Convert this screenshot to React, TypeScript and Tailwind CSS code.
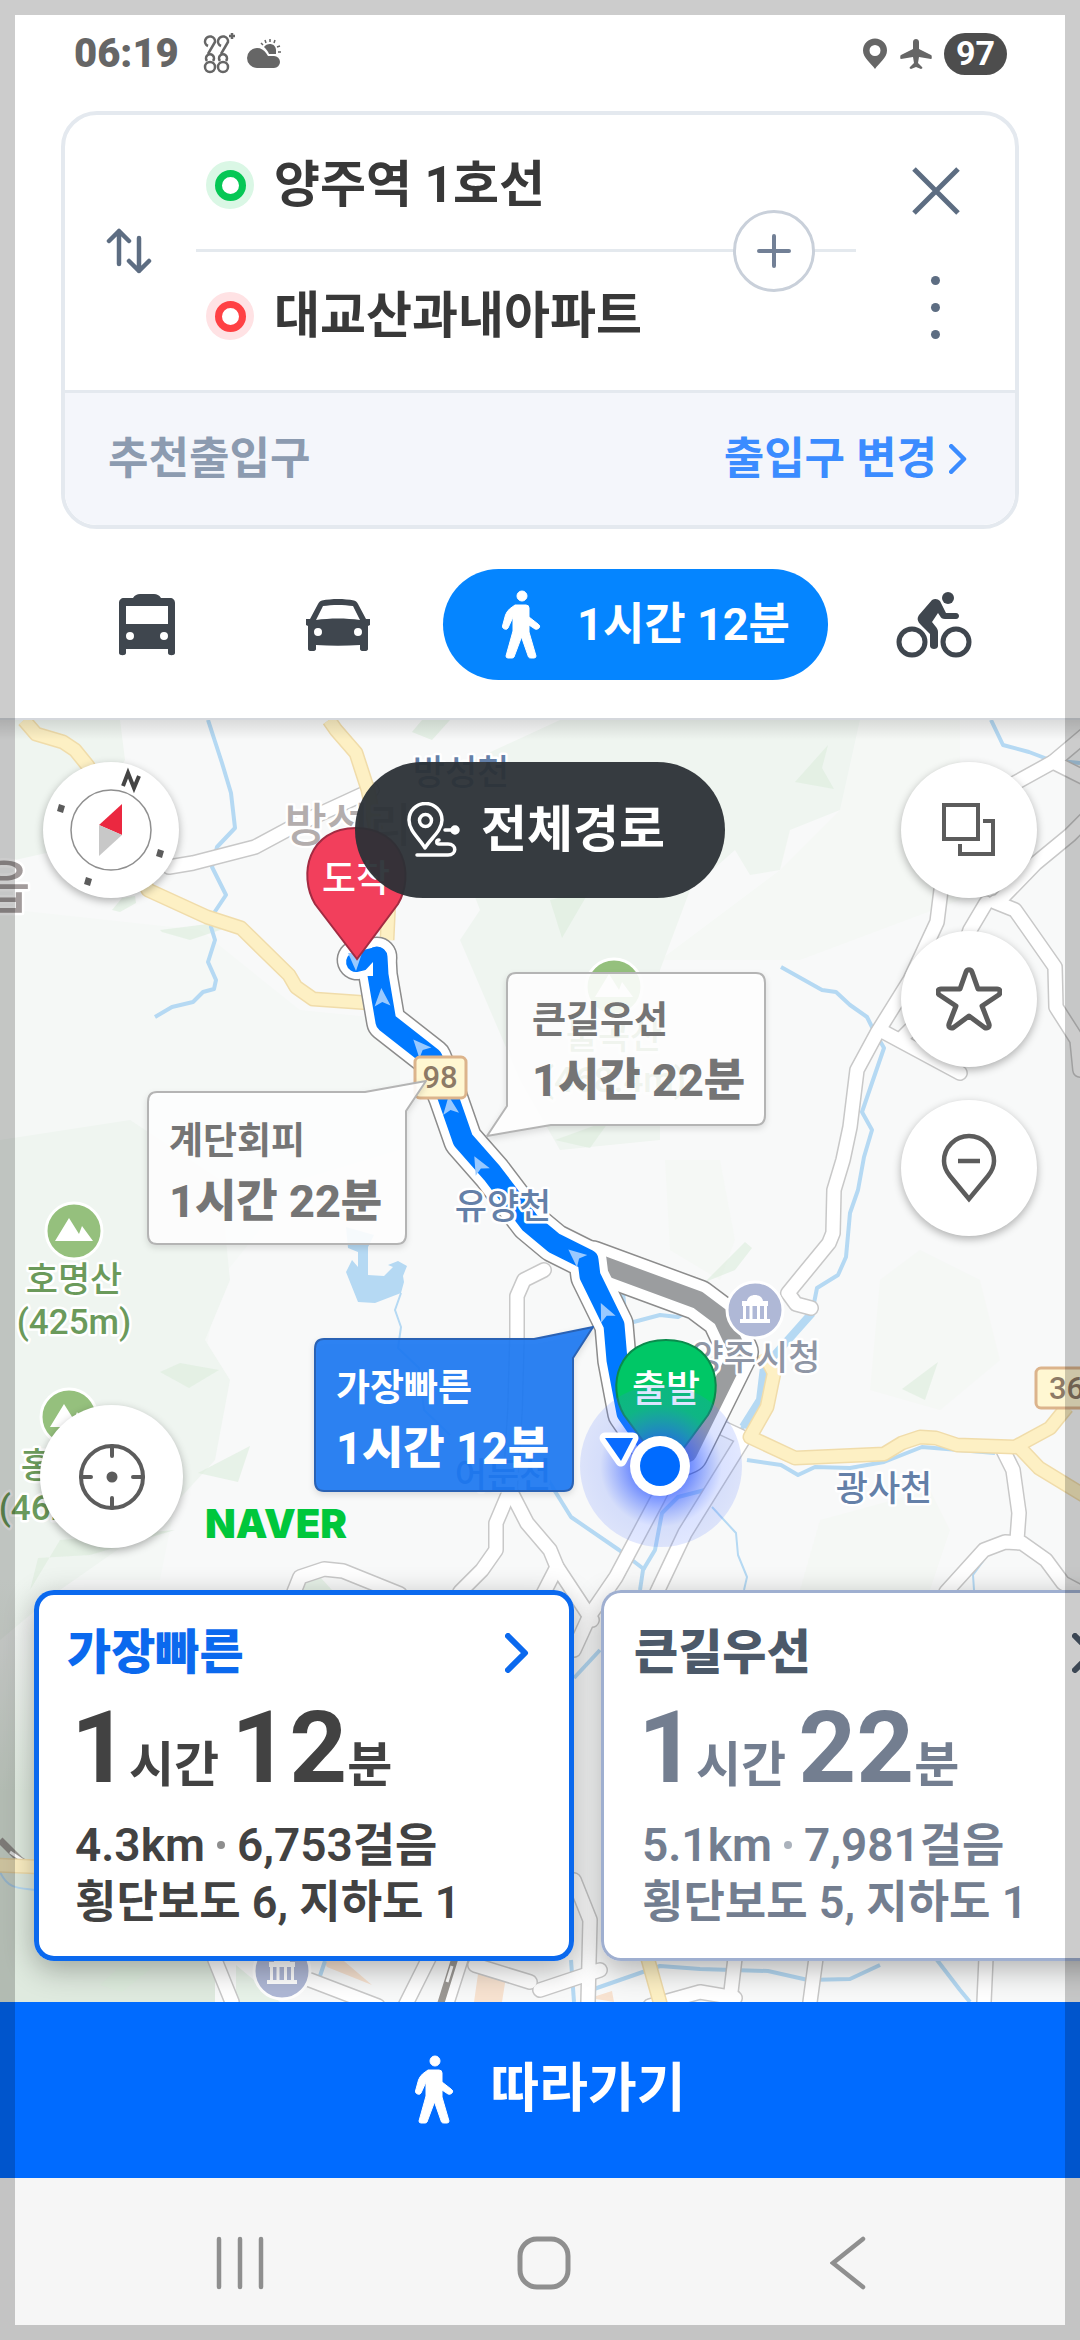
import React from 'react';

// ─────────────────────────────────────────────────────────────────────────────
// Icons
// ─────────────────────────────────────────────────────────────────────────────

const WalkIcon = () => (
  <svg width="40" height="70" viewBox="0 0 40 70" fill="currentColor" stroke="currentColor" strokeWidth="1" strokeLinejoin="round" aria-hidden="true">
    <circle cx="21" cy="6" r="5" />
    <path d="M14 15h11q3 0 3 3v9l9 7q3 2 1 4-2 2-4 1l-6-4v7l7 24q0 2-2 2h-3q-2 0-2.500-1L20.500 47 13 67q-.5 1-2 1H7q-2 0-2-2l7-25V27L7 38q-1 2-3.500 1-2.500-1-2-3l3-11q1-3 4-6z" />
  </svg>
);

const BusIcon = () => (
  <svg width="56" height="62" viewBox="0 0 56 62" fill="currentColor" fillRule="evenodd" aria-hidden="true">
    <path d="M0 9c0-3 2-5 5-5h9c2-3 4-4 7-4h14c3 0 5 1 7 4h9c3 0 5 2 5 5v50c0 3-7 3-7 0v-4H7v4c0 3-7 3-7 0zM7 12v18h42V12zM11 38a4 4 0 1 0 0 8 4 4 0 0 0 0-8zM45 38a4 4 0 1 0 0 8 4 4 0 0 0 0-8z" />
  </svg>
);

const CarIcon = () => (
  <svg width="64" height="52" viewBox="0 0 64 52" fill="currentColor" fillRule="evenodd" aria-hidden="true">
    <path d="M12 5c1-2 2-3 4-3.500 10-2 22-2 32 0 2 .5 3 1.500 4 3.500l8 15h4v6l-2 1v23c0 3-8 3-8 0v-4c-15 1-29 1-44 0v4c0 3-8 3-8 0V27l-2-1v-6h4zM17 7l-7 14c14-2 30-2 44 0L47 7c-9-1.500-21-1.500-30 0zM12 29a4 4 0 1 0 0 8 4 4 0 0 0 0-8zM52 29a4 4 0 1 0 0 8 4 4 0 0 0 0-8z" />
  </svg>
);

const BikeIcon = () => (
  <svg width="76" height="66" viewBox="0 0 76 66" aria-hidden="true">
    <g fill="none" stroke="currentColor" strokeWidth="5">
      <circle cx="16" cy="50" r="13" />
      <circle cx="60" cy="50" r="13" />
    </g>
    <path fill="currentColor" d="M36 8c3-2 6-1 8 1l6 12h10c4 0 4 6 0 6H49c-3 0-4-1-5-3l-2-3-6 9 4 5c1 1 2 3 2 5v14c0 4-8 4-8 0V42l-9-9c-4-4-4-7-2-10z" />
    <circle cx="52" cy="6" r="6" fill="currentColor" />
  </svg>
);

const SwapIcon = () => (
  <svg width="46" height="46" viewBox="0 0 46 46" fill="none" stroke="currentColor" strokeWidth="4.500" strokeLinecap="round" strokeLinejoin="round" aria-hidden="true">
    <path d="M13 36V3M3 13L13 3l10 10M33 10v33M23 33l10 10 10-10" />
  </svg>
);

const CloseIcon = () => (
  <svg width="48" height="48" viewBox="0 0 48 48" fill="none" stroke="currentColor" strokeWidth="5" aria-hidden="true">
    <path d="M2 2l44 44M46 2L2 46" />
  </svg>
);

const ChevronIcon = ({ className }: { className: string }) => (
  <svg className={className} viewBox="0 0 24 40" fill="none" stroke="currentColor" strokeWidth="6" strokeLinecap="round" strokeLinejoin="round" aria-hidden="true">
    <path d="M3 3l17 17L3 37" />
  </svg>
);

const RouteIcon = () => (
  <svg width="54" height="56" viewBox="0 0 54 56" fill="none" stroke="currentColor" strokeWidth="3.500" strokeLinecap="round" strokeLinejoin="round" aria-hidden="true">
    <path d="M18 46C13 37 2 29 2 18a16.500 16.500 0 0 1 33 0c0 11-12 19-17 28z" />
    <circle cx="18.500" cy="18.500" r="6" />
    <path d="M10 53h31c9 0 9-11 0-11H32c-3 0-3-4 0-4M38 28h10" />
    <circle cx="48" cy="28" r="3" fill="currentColor" />
  </svg>
);

const LayersIcon = () => (
  <svg width="54" height="54" viewBox="0 0 54 54" fill="none" stroke="currentColor" strokeWidth="4" aria-hidden="true">
    <path d="M2 2h34v34H2zM41 18h10v33H18V41" />
  </svg>
);

const StarIcon = () => (
  <svg width="66" height="64" viewBox="0 0 66 64" fill="none" stroke="currentColor" strokeWidth="5" strokeLinejoin="round" aria-hidden="true">
    <path d="M30 5c1-3 5-3 6 0l6 17h19c3.500 0 4 4 1.500 6L46 39l7 18c1 3-2 5-4.500 3.500L33 49 17.500 60.500C15 62 12 60 13 57l7-18L3.500 28C1 26 1.500 22 5 22h19z" />
  </svg>
);

const PlaceMinusIcon = () => (
  <svg width="56" height="70" viewBox="0 0 56 70" fill="none" stroke="currentColor" strokeWidth="4.500" aria-hidden="true">
    <path d="M28 66L9 43C5 38 3 33 3 28a25 25 0 0 1 50 0c0 5-2 10-6 15zM17 28h22" />
  </svg>
);

const LocateIcon = () => (
  <svg width="68" height="68" viewBox="0 0 68 68" fill="none" stroke="currentColor" strokeWidth="4" strokeLinecap="round" aria-hidden="true">
    <circle cx="34" cy="34" r="31" />
    <path d="M34 3v10M34 55v10M3 34h10M55 34h10" />
    <circle cx="34" cy="34" r="5.500" fill="currentColor" stroke="none" />
  </svg>
);

const CompassIcon = () => (
  <svg width="136" height="136" viewBox="0 0 136 136" aria-hidden="true">
    <circle cx="68" cy="68" r="40" fill="none" stroke="#8f8f8f" strokeWidth="1.500" />
    <path d="M79 42v31L56 63z" fill="#eb2840" />
    <path d="M56 63l23 10-23 21z" fill="#c8c8c8" />
    <g fill="#5c5c5c">
      <path d="M16 42l6 2-2 7-6-2zM115 87l6 2-2 7-6-2zM43 115l6 2-2 7-6-2z" />
    </g>
    <path d="M80 24l5-13 6 15 5-12" fill="none" stroke="#444" strokeWidth="4" />
  </svg>
);

// ─────────────────────────────────────────────────────────────────────────────
// Map
// ─────────────────────────────────────────────────────────────────────────────

const RIVERS = [
  'M208 0L222 43 231 73 235 108 217 127 212 147 226 175 214 193 211 207 215 220 208 242 216 260 214 269 203 272 193 282 172 287 155 297',
  'M991 0L1003 25 1029 32 1050 40 1080 43',
  'M781 247L822 270 836 272 850 285 867 297 872 307 884 328 862 392 872 410 864 437 858 470 850 493 846 537 838 555 817 568 812 593 788 620 764 647 760 680 743 707 716 757 705 770 678 777 662 793 655 830 643 850 640 870',
  'M747 740L781 745 798 755 815 747 850 748 884 742 922 727 995 733',
  'M623 572L626 604 660 595 678 597 686 592',
  'M548 760L571 797 619 830 645 850',
  'M594 1269L660 1246 700 1249 768 1251 808 1260 850 1259 880 1245',
  'M937 1240L960 1270 970 1282',
  'M325 1241L318 1262M571 1240L574 1282M574 958L600 930',
];

const THIN_RIVERS = [
  'M401 573L395 590 401 607 398 628 419 648 424 690 450 715',
  'M712 787L736 813 738 835 747 857 744 870',
  'M987 836L973 855 974 870',
  'M0 1152C8 1170 20 1168 36 1170',
];

const WHITE_ROADS = [
  'M169 147L193 143 255 127 296 105 372 70',
  'M941 170L937 202 910 260 877 313 857 350 850 407 843 440 834 470 833 513 829 523 788 573 796 584 811 588',
  'M986 183L970 210 950 270 900 320',
  'M995 182L1015 190 1027 207 1055 247 1056 287 1077 320 1080 350',
  'M960 100L1015 63 1053 42 1085 15',
  'M1053 42L1085 58',
  'M1000 180L1036 143 1070 115 1085 100',
  'M880 310L960 353',
  'M544 550L524 560 517 576 517 617 515 690 510 770 496 803 496 830 482 850 460 872',
  'M510 770L527 803 550 830 557 847 592 900',
  'M294 872L300 857 324 849 343 851 400 874',
  'M716 705L744 718 685 813 657 872',
  'M722 650L657 780 616 857 590 895 574 930',
  'M1003 730L1013 750 1019 793 1017 820',
  'M946 872L984 830 1005 822 1022 823 1046 840 1063 863 1080 872',
  'M557 847L540 880M574 1160L590 1200 588 1282M540 1270L600 1250',
  'M215 1240L232 1282M310 1260L378 1286M430 1236L405 1286M462 1236L446 1286M735 1238L730 1280M816 1238L810 1282M986 1238L984 1282',
  'M475 1245L530 1262M735 1278L700 1272 650 1286',
];

const YELLOW_ROADS = [
  'M24 0L36 14 63 22 75 30 88 46 148 170 207 197 241 208 289 255 296 267 313 279 370 283',
  'M329 0L336 10 356 33 368 70 389 177 387 220',
  'M764 633L774 653 767 687 750 717 795 738 884 734 902 723 920 717 936 718 957 725 1015 727 1050 708 1067 687',
  'M1020 728L1039 748 1085 776',
  'M647 1236L661 1286M-5 1145L40 1147',
];

const FORESTS = [
  'M15 0H120L125 40 95 90 60 130 15 140z',
  'M0 420L130 400 220 460 230 560 205 620 230 660 215 740 160 800 60 870 0 920z',
  'M560 0H860L840 90 790 110 780 150 750 155 735 130 690 170 660 250 660 420 560 430 520 360 460 220 480 190 430 60z',
];

// paler hills east of the river
const HILLS = [
  'M860 0H960V180L800 240 660 240 780 150 840 90z',
  'M665 440H720L735 520 720 560 670 530z',
  'M880 560L920 530 980 560 1000 640 940 690 870 670z',
  'M820 800L930 770 950 810 930 870H800z',
];

const FOREST_SPOTS = [
  'M112 190L122 178 135 176 136 183 120 192z',
  'M412 12L422 0H450L432 20z',
  'M795 62L828 25 822 48 834 69z',
  'M550 180L590 170 562 218z',
  'M160 210L240 200 220 210 190 220 162 212z',
  'M160 652L180 643 219 650 189 668z',
  'M198 753L250 726 238 762z',
  'M705 562L745 522 752 528 735 550z',
  'M902 669L938 642 925 680z',
  'M30 870L60 820 175 810 90 835 38 838z',
  'M302 870L305 858 320 857 332 870z',
  'M555 420L610 400 590 428z',
  'M100 1265L120 1246 152 1248 122 1272z',
  'M236 1282V1245L280 1282z',
];

// x, y, heading
const ROUTE_ARROWS: [number, number, number][] = [
  [382, 278, -4],
  [420, 327, -42],
  [450, 386, -8],
  [479, 445, -28],
  [576, 536, -50],
  [605, 592, -25],
];

const ROUTE = 'M377 237L378 255 386 302 432 338 448 377 463 420 492 453 530 503 554 523 588 540 590 556 614 605 617 640 627 693 656 735';
const ALT_ROUTE = 'M592 541L698 580 722 598 738 632 688 733 660 745';

type LabelProps = { x: number; y: number; size?: number; fill: string; weight?: number; children: string };

const MapLabel = ({ x, y, size = 35, fill, weight = 500, children }: LabelProps) => (
  <text x={x} y={y} fontSize={size} fill={fill} fontWeight={weight} textAnchor="middle" stroke="#fff" strokeWidth="5" strokeLinejoin="round" paintOrder="stroke">
    {children}
  </text>
);

const Mountain = ({ x, y }: { x: number; y: number }) => (
  <g transform={`translate(${x} ${y})`}>
    <circle r="28" fill="#95c07d" stroke="#fff" strokeWidth="3" />
    <path d="M-19 10L-5-13 5 3 8-5 19 10z" fill="#fff" />
  </g>
);

const CityHall = ({ x, y }: { x: number; y: number }) => (
  <g transform={`translate(${x} ${y})`}>
    <circle r="28" fill="#afb8d6" stroke="#fff" strokeWidth="3" />
    <path d="M-13-4v-5h5c1-8 15-8 16 0h5v5zM-12-4h3V9h-3zM-5.500-4h3V9h-3zM2-4h3V9H2zM9-4h3V9H9zM-15 9h30v4h-30z" fill="#fff" />
  </g>
);

const MapCanvas = () => (
  <svg className="absolute inset-0 h-full w-full" viewBox="0 0 1080 1282" preserveAspectRatio="xMidYMin slice" role="img" aria-label="경로 지도">
    <defs>
      <radialGradient id="glow">
        <stop offset="0.3" stopColor="#2a55ff" stopOpacity="0.75" />
        <stop offset="0.75" stopColor="#4a70ff" stopOpacity="0.2" />
        <stop offset="1" stopColor="#4a70ff" stopOpacity="0.16" />
      </radialGradient>
      <linearGradient id="headerShade" x1="0" y1="0" x2="0" y2="1">
        <stop offset="0" stopColor="#000" stopOpacity="0.12" />
        <stop offset="1" stopColor="#000" stopOpacity="0" />
      </linearGradient>
      <linearGradient id="lowland" x1="0" y1="0" x2="0" y2="1">
        <stop offset="0" stopColor="#dfeadf" stopOpacity="0" />
        <stop offset="0.5" stopColor="#dfeadf" />
      </linearGradient>
    </defs>
    <rect width="1080" height="1282" fill="#f8f9f9" />
    <path d="M15 190L200 210 300 290 400 300V430L300 460 220 560 160 860H0V190z" fill="#f5f8f6" />
    {HILLS.map((d) => <path key={d} d={d} fill="#f5f8f5" />)}
    {FORESTS.map((d) => <path key={d} d={d} fill="#eff5f0" />)}
    <path d="M0 860H60V1241H215V1282H0z" fill="url(#lowland)" />
    {FOREST_SPOTS.map((d) => <path key={d} d={d} fill="#dcecdc" opacity="0.6" />)}
    <path d="M324 1241h20l28 24-45-18zM478 1254l28 3-4 25h-28zM590 1278l22-7 2 11z" fill="#f7e2d0" />

    <g fill="none" stroke="#b5d9f3" strokeLinejoin="round">
      {RIVERS.map((d) => <path key={d} d={d} strokeWidth="4" />)}
      {THIN_RIVERS.map((d) => <path key={d} d={d} strokeWidth="2" />)}
      <path d="M812 593L788 620 764 647 760 680 743 707" strokeWidth="8" />
    </g>
    <path d="M346 507L374 515 368 527V555L384 556 393 547 388 545 398 541 407 546 403 556 404 562 401 573 375 583 358 582 346 552 352 540 358 547V532L348 528z" fill="#b5d9f3" />

    <g fill="none" strokeLinejoin="round">
      {WHITE_ROADS.map((d) => <path key={d} d={d} stroke="#c8c8c8" strokeWidth="16" strokeLinecap="round" />)}
      {WHITE_ROADS.map((d) => <path key={d} d={d} stroke="#fff" strokeWidth="13" strokeLinecap="round" />)}
      <path d="M0 1120L20 1140 36 1150M455 1238L440 1286" stroke="#9b9894" strokeWidth="7" />
      <path d="M10 1132L28 1144M452 1246L447 1262" stroke="#fff" strokeWidth="3" />
      {YELLOW_ROADS.map((d) => <path key={d} d={d} stroke="#f0dcaa" strokeWidth="15" />)}
      {YELLOW_ROADS.map((d) => <path key={d} d={d} stroke="#fdf0c4" strokeWidth="12" />)}
    </g>

    <g fontFamily='Roboto, "Noto Sans CJK KR", sans-serif'>
      <MapLabel x={4} y={188} size={58} fill="#a29b9b">읍</MapLabel>
      <MapLabel x={348} y={121} size={46} fill="#b3adad">방성리</MapLabel>
      <MapLabel x={461} y={65} fill="#6480a8">방성천</MapLabel>
      <Mountain x={614} y={267} />
      <MapLabel x={614} y={329} fill="#6b9a5b">불곡산</MapLabel>
      <MapLabel x={614} y={372} fill="#6b9a5b">(468.4m)</MapLabel>
      <Mountain x={74} y={511} />
      <MapLabel x={74} y={572} fill="#6b9a5b">호명산</MapLabel>
      <MapLabel x={74} y={614} fill="#6b9a5b">(425m)</MapLabel>
      <Mountain x={69} y={697} />
      <MapLabel x={69} y={758} fill="#6b9a5b">홍복산</MapLabel>
      <MapLabel x={56} y={800} fill="#6b9a5b">(462m)</MapLabel>

      {/* walking routes */}
      <g fill="none" strokeLinejoin="round" strokeLinecap="round">
        <path d={ALT_ROUTE} stroke="#8c8c8c" strokeWidth="42" />
        <path d="M357 240L377 237" stroke="#8c8c8c" strokeWidth="41" />
        <path d={ROUTE} stroke="#8c8c8c" strokeWidth="40" />
        <path d={ALT_ROUTE} stroke="#fff" strokeWidth="39" />
        <path d="M357 240L377 237" stroke="#fff" strokeWidth="38" />
        <path d={ALT_ROUTE} stroke="#9b9d9f" strokeWidth="18" />
        <path d={ROUTE} stroke="#fff" strokeWidth="37" />
        <path d="M356 242L377 237" stroke="#0079ff" strokeWidth="20" />
        <path d={ROUTE} stroke="#0079ff" strokeWidth="21" />
      </g>
      <path d="M360 256L373 242V256z" fill="#fff" />
      <g fill="#99c9ff">
        {ROUTE_ARROWS.map(([x, y, deg]) => (
          <path key={y} d="M0-10L8 8 0 4-8 8z" transform={`translate(${x} ${y}) rotate(${deg})`} />
        ))}
        <path d="M348 233h14l-6 18z" />
      </g>

      <MapLabel x={503} y={499} fill="#6480a8">유양천</MapLabel>
      <MapLabel x={503} y={768} fill="#4a70b0">어둔천</MapLabel>
      <CityHall x={755} y={590} />
      <MapLabel x={756} y={650} fill="#8f96a5">양주시청</MapLabel>
      <MapLabel x={884} y={781} fill="#6480a8">광사천</MapLabel>
      <CityHall x={282} y={1251} />

      {/* road numbers */}
      <g stroke="#dcb48c" strokeWidth="3" fill="#fff7d2">
        <rect x="415" y="337" width="51" height="41" rx="5" />
        <rect x="1036" y="648" width="60" height="40" rx="5" />
      </g>
      <g fill="#8d7a66" fontSize="31" fontWeight="500">
        <text x="440" y="368" textAnchor="middle">98</text>
        <text x="1049" y="679">36</text>
      </g>

      {/* destination */}
      <path d="M357 239L315 184C298 155 308 108 356 108S415 155 398 184z" fill="#f23f5c" stroke="#a32b42" strokeWidth="2" />
      <text x="356" y="172" fontSize="37" fontWeight="500" fill="#fff" textAnchor="middle">도착</text>

      {/* origin */}
      <path d="M666 752L624 695C607 666 617 620 666 620S725 666 708 695z" fill="#00c766" stroke="#0a8a4c" strokeWidth="2" />
      <text x="666" y="682" fontSize="37" fontWeight="500" fill="#fff" textAnchor="middle">출발</text>

      {/* current position */}
      <circle cx="661" cy="746" r="81" fill="url(#glow)" />
      <path d="M605 718h28l-12 23z" fill="#fff" stroke="#fff" strokeWidth="11" strokeLinejoin="round" />
      <path d="M605 718h28l-12 23z" fill="#0a6cff" />
      <circle cx="660" cy="746" r="30" fill="#fff" />
      <circle cx="660" cy="746" r="20" fill="#006bff" />
    </g>
    <rect width="1080" height="20" fill="url(#headerShade)" />
  </svg>
);

type CalloutProps = {
  name: string;
  time: string;
  place: string;
  textClass: string;
  shape: string;
  active?: boolean;
};

const Callout = ({ name, time, place, textClass, shape, active = false }: CalloutProps) => (
  <button type="button" className={`absolute h-[154px] w-[260px] text-left ${place}`}>
    <svg className="absolute inset-0 overflow-visible drop-shadow-md" width="260" height="154" viewBox="0 0 260 154" aria-hidden="true">
      <path
        d={shape}
        fill={active ? '#1c78f2' : '#fff'}
        fillOpacity={active ? 0.92 : 0.9}
        stroke={active ? '#2a62b4' : '#b4b4b4'}
        strokeWidth="2"
        strokeLinejoin="round"
      />
    </svg>
    <span className={`relative flex flex-col ${textClass}`}>
      <span className="text-[37px] leading-[56px] font-bold">{name}</span>
      <span className="text-[45px] leading-[64px] font-extrabold">{time}</span>
    </span>
  </button>
);

// ─────────────────────────────────────────────────────────────────────────────
// Sections
// ─────────────────────────────────────────────────────────────────────────────

const StatusBar = () => (
  <div className="flex h-[111px] items-center justify-between pr-[73px] pb-1 pl-[74px] text-[#666]">
    <div className="flex items-center">
      <span className="text-[40px] font-black">06:19</span>
      <svg className="ml-6" width="32" height="42" viewBox="0 0 32 42" fill="none" stroke="currentColor" strokeWidth="2.500" aria-hidden="true">
        <path d="M5 13A5 5 0 1 1 12 9L5 21M18 13A5 5 0 1 1 25 9L18 21M29 0v6M26 3h6" />
        <path d="M4 28A4 4 0 1 1 10 28M17 28A4 4 0 1 1 23 28" />
        <circle cx="7" cy="34" r="5" />
        <circle cx="20" cy="34" r="5" />
      </svg>
      <svg className="ml-3" width="34" height="30" viewBox="0 0 34 30" fill="currentColor" aria-hidden="true">
        <path d="M10 9c4 0 7 2 9 5l2 3h6a5.500 5.500 0 0 1 0 12H10A10 10 0 0 1 10 9z" />
        <path d="M17 8c3-5 12-4 12 3v4h-7c-1-3-3-5-5-7z" />
        <path d="M23 0v3M18 1l1 3M14 4l2 2M28 1l-1 3M33 7l-3 1M34 13h-3" stroke="currentColor" strokeWidth="1.500" />
      </svg>
    </div>
    <div className="flex items-center gap-3">
      <svg width="26" height="31" viewBox="0 0 26 31" fill="currentColor" fillRule="evenodd" aria-hidden="true">
        <path d="M13 31C9 25 1 20 1 12.500a12 12 0 0 1 24 0C25 20 17 25 13 31zM13 7a5.500 5.500 0 1 0 0 11 5.500 5.500 0 0 0 0-11z" />
      </svg>
      <svg width="32" height="30" viewBox="0 0 32 30" fill="currentColor" aria-hidden="true">
        <path d="M13 3c0-4 6-4 6 0v7l12 6c1 .5 1 4 0 4l-12-2-1 6 4 4c1 1 0 2-1 2l-5-2-5 2c-1 0-2-1-1-2l4-4-1-6-12 2c-1 0-1-3.500 0-4l12-6z" />
      </svg>
      <span className="flex h-[42px] w-[63px] items-center justify-center rounded-full bg-[#4d4d4d] text-[34px] font-bold text-white">97</span>
    </div>
  </div>
);

const Waypoint = ({ name, halo, ring, className }: { name: string; halo: string; ring: string; className: string }) => (
  <button type="button" className={`flex w-full items-center gap-5 pl-2.5 text-left ${className}`}>
    <span className={`flex size-12 items-center justify-center rounded-full ${halo}`}>
      <span className={`size-[31px] rounded-full border-[7px] bg-white ${ring}`} />
    </span>
    <span className="text-[50px] leading-[60px] font-bold text-[#383838]">{name}</span>
  </button>
);

const SearchCard = () => (
  <section className="mx-[61px] overflow-hidden rounded-[36px] border-4 border-[#e4e9ef]">
    <div className="flex text-[#5d6d82]">
      <button type="button" aria-label="출발 도착 바꾸기" className="flex w-[131px] items-center justify-center pr-1 pb-1">
        <SwapIcon />
      </button>
      <div className="flex-1">
        <Waypoint name="양주역 1호선" halo="bg-[#daf7e5]" ring="border-[#06c755]" className="h-[134px] pt-1.5" />
        <div className="relative h-[3px] bg-[#e4e9ee]">
          <button
            type="button"
            aria-label="경유지 추가"
            className="absolute top-1/2 right-[41px] flex size-[82px] -translate-y-1/2 items-center justify-center rounded-full border-[3px] border-[#c9d0da] bg-white text-[#728096]"
          >
            <svg width="34" height="34" viewBox="0 0 34 34" stroke="currentColor" strokeWidth="4" strokeLinecap="round" aria-hidden="true">
              <path d="M17 2v30M2 17h30" />
            </svg>
          </button>
        </div>
        <Waypoint name="대교산과내아파트" halo="bg-[#ffe2e4]" ring="border-[#ff4144]" className="h-[138px] pb-2.5" />
      </div>
      <div className="flex w-[159px] flex-col items-center justify-center gap-[61px]">
        <button type="button" aria-label="닫기"><CloseIcon /></button>
        <button type="button" aria-label="더보기" className="flex flex-col items-center gap-[18px] px-4">
          <span className="size-[9px] rounded-full bg-[#5d6d82]" />
          <span className="size-[9px] rounded-full bg-[#5d6d82]" />
          <span className="size-[9px] rounded-full bg-[#5d6d82]" />
        </button>
      </div>
    </div>
    <div className="flex h-[135px] items-center justify-between border-t-[3px] border-[#e4e9ef] bg-[#f4f6fb] pr-[48px] pl-[43px] text-[44px] font-bold">
      <span className="text-[#8c9bb0]">추천출입구</span>
      <button type="button" className="flex items-center gap-3 text-[#3b8cff]">
        출입구 변경
        <ChevronIcon className="h-[30px] w-[18px]" />
      </button>
    </div>
  </section>
);

const ModeTabs = () => (
  <nav className="flex items-center border-b-2 border-[#d4d7dc] px-[51px] pt-10 pb-[38px] text-[#3f464e]" aria-label="이동 수단">
    <button type="button" aria-label="대중교통" className="flex flex-1 justify-center"><BusIcon /></button>
    <button type="button" aria-label="자동차" className="flex flex-1 justify-center"><CarIcon /></button>
    <button type="button" aria-current="page" className="mx-2.5 flex h-[111px] w-[385px] items-center justify-center gap-9 rounded-full bg-[#0585ff] pl-5 text-[45px] font-bold text-white">
      <WalkIcon />
      1시간 12분
    </button>
    <button type="button" aria-label="자전거" className="flex flex-1 justify-center"><BikeIcon /></button>
  </nav>
);

const ROUND_BUTTON = 'flex size-[136px] items-center justify-center rounded-full bg-white text-[#5c5c5c] shadow-[0_3px_8px_rgba(0,0,0,0.3)]';

type RouteOption = {
  name: string;
  hours: number;
  minutes: number;
  distance: string;
  steps: string;
  crossings: string;
};

const ROUTES: RouteOption[] = [
  { name: '가장빠른', hours: 1, minutes: 12, distance: '4.3km', steps: '6,753걸음', crossings: '횡단보도 6, 지하도 1' },
  { name: '큰길우선', hours: 1, minutes: 22, distance: '5.1km', steps: '7,981걸음', crossings: '횡단보도 5, 지하도 1' },
];

const RouteCard = ({ route, selected }: { route: RouteOption; selected: boolean }) => (
  <article
    className={`w-[540px] shrink-0 rounded-[20px] bg-white pt-[38px] pr-[45px] pb-[29px] pl-[33px] shadow-[0_8px_30px_rgba(0,0,0,0.3)] ring-inset ${
      selected ? 'ring-[5px] ring-[#0b69ee] text-[#424242]' : 'ring-[3px] ring-[#9fafd0] text-[#737e90]'
    }`}
  >
    <button type="button" className={`flex w-full items-center justify-between ${selected ? 'text-[#0b69ee]' : 'text-[#4c5969]'}`}>
      <span className="text-[48px] leading-[50px] font-black">{route.name}</span>
      <ChevronIcon className="h-10 w-6" />
    </button>
    <p className="mt-5 ml-1 text-[101px] leading-[100px] font-bold">
      {route.hours}
      <span className="text-[49px] leading-none">시간 </span>
      {route.minutes}
      <span className="text-[49px] leading-none">분</span>
    </p>
    <div className="mt-[18px] ml-2 text-[46px] leading-[58px] font-semibold">
      <p className="flex items-center">
        {route.distance}
        <span className="mx-3 size-2 rounded-full bg-current opacity-60" />
        {route.steps}
      </p>
      <p className="text-[45px]">{route.crossings}</p>
    </div>
  </article>
);

const MapSection = () => (
  <section className="relative flex flex-1 flex-col">
    <MapCanvas />
    <Callout
      name="큰길우선"
      time="1시간 22분"
      place="top-[252px] left-[506px]"
      textClass="pt-2 pl-[26px] text-[#757575]"
      shape="M10 1H250q9 0 9 10V143q0 10-9 10H45L-19 164 1 134V11Q1 1 10 1z"
    />
    <Callout
      name="계단회피"
      time="1시간 22분"
      place="top-[371px] left-[147px]"
      textClass="pt-3 pl-[22px] text-[#757575]"
      shape="M10 1H218L279-10 259 20V143q0 10-9 10H10q-9 0-9-10V11Q1 1 10 1z"
    />
    <Callout
      name="가장빠른"
      time="1시간 12분"
      place="top-[618px] left-[314px]"
      textClass="pt-3 pl-[22px] text-white"
      shape="M10 1H220L279-11 259 20V143q0 10-9 10H10q-9 0-9-10V11Q1 1 10 1z"
      active
    />

    <div className="relative flex items-start justify-between px-[43px] pt-[42px]">
      <button type="button" aria-label="나침반" className={ROUND_BUTTON}><CompassIcon /></button>
      <button type="button" className="flex h-[136px] w-[370px] items-center justify-center gap-5 rounded-full bg-[#2b3036]/95 pr-2 text-[50px] font-bold text-white">
        <RouteIcon />
        전체경로
      </button>
      <div className="flex flex-col gap-[33px]">
        <button type="button" aria-label="지도 종류" className={ROUND_BUTTON}><LayersIcon /></button>
        <button type="button" aria-label="즐겨찾기" className={ROUND_BUTTON}><StarIcon /></button>
        <button type="button" aria-label="장소 숨기기" className={ROUND_BUTTON}><PlaceMinusIcon /></button>
      </div>
    </div>

    <div className="relative mt-auto flex items-end gap-[22px] px-10 pb-[42px]">
      <button type="button" aria-label="현재 위치" className="flex size-[143px] items-center justify-center rounded-full bg-white text-[#5c5c5c] shadow-[0_3px_8px_rgba(0,0,0,0.3)]">
        <LocateIcon />
      </button>
      <span className="font-[Inter] text-[40px] leading-[48px] font-black text-[#00c73c]">NAVER</span>
    </div>
    <div className="relative flex gap-[27px] overflow-x-clip pb-[41px] pl-[34px]">
      {ROUTES.map((route, i) => <RouteCard key={route.name} route={route} selected={i === 0} />)}
    </div>
  </section>
);

const NavigationBar = () => (
  <nav className="flex h-[162px] items-center bg-[#f6f6f6] pt-2 pr-20 pl-[88px] text-[#8f8f8f]" aria-label="시스템 탐색">
    <button type="button" aria-label="최근 앱" className="flex flex-1 justify-center">
      <svg width="50" height="54" viewBox="0 0 50 54" stroke="currentColor" strokeWidth="4.500" strokeLinecap="round" aria-hidden="true">
        <path d="M4 3v48M25 3v48M46 3v48" />
      </svg>
    </button>
    <button type="button" aria-label="홈" className="flex flex-1 justify-center">
      <svg width="54" height="54" viewBox="0 0 54 54" fill="none" stroke="currentColor" strokeWidth="5" aria-hidden="true">
        <rect x="3" y="3" width="48" height="48" rx="17" />
      </svg>
    </button>
    <button type="button" aria-label="뒤로" className="flex flex-1 justify-center">
      <svg width="36" height="54" viewBox="0 0 36 54" fill="none" stroke="currentColor" strokeWidth="4.500" strokeLinecap="round" aria-hidden="true">
        <path d="M33 3L3 27l30 24" />
      </svg>
    </button>
  </nav>
);

// ─────────────────────────────────────────────────────────────────────────────
// Page
// ─────────────────────────────────────────────────────────────────────────────

export default function App() {
  return (
    <div className="relative flex min-h-screen flex-col bg-white font-[Roboto,'Noto_Sans_CJK_KR',sans-serif]">
      <header>
        <StatusBar />
        <SearchCard />
        <ModeTabs />
      </header>
      <MapSection />
      <button type="button" className="relative flex h-[176px] items-center justify-center gap-9 bg-[#006bff] pl-5 text-[53px] font-bold text-white">
        <WalkIcon />
        따라가기
      </button>
      <NavigationBar />
      <div className="pointer-events-none absolute inset-0 border-[15px] border-black/20" />
    </div>
  );
}
